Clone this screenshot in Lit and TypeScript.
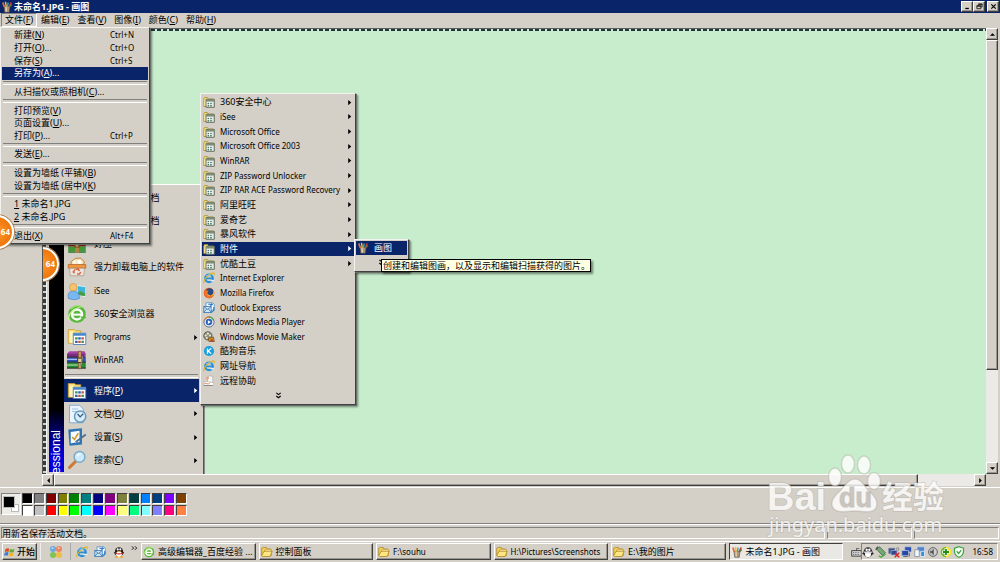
import { LitElement, html, svg, css, nothing } from "lit";
import { customElement, property } from "lit/decorators.js";

type Entry = { icon?: string; label: string; key?: string; hint?: string; sub?: boolean; active?: boolean };

const glyphs: Record<string, unknown> = {
  folder: svg`<path d="M1 4l1-2h4l1 2h7v10H1z" fill="#f3dd78" stroke="#a98c2c"/><path d="M2 5h3v8H2z" fill="#fff3b0"/><path d="M4 4.500h11v10.500H4z" fill="#fff" stroke="#5a6450" stroke-width="1.300"/><path d="M4 4.500h11v3H4z" fill="#7d8c76"/><path d="M6 9h2.200v2H6zM9.500 9h2.200v2H9.500zM6 12h2.200v2H6zM9.500 12h2.200v2H9.500z" fill="#4d7c6c"/><path d="M12.800 8h1.500v6h-1.500z" fill="#bbc9c0"/>`,
  open: svg`<path d="M1 13V3l2-1h4l1 2h5v3" fill="#f5d35c" stroke="#a97d13"/><path d="M5 5h9v8H4z" fill="#fffbd8" stroke="#c29a2b"/><path d="M1 13l3-6h11l-3 7H2z" fill="#ffe684" stroke="#a97d13"/>`,
  programs: svg`<path d="M1 2h5l1 1h4v10H1z" fill="#f8dc76" stroke="#c59b31" stroke-width=".6"/><path d="M2 4l3-1v10l-3-.5z" fill="#fff3b5"/><path d="M5 5h10v9H5z" fill="#fff" stroke="#4b7fb5" stroke-width=".7"/><path d="M5 5h10v2H5z" fill="#4a87cc"/><path d="M6.500 8.200h2v1.800h-2zM11.500 11h2v1.800h-2z" fill="#409157"/><path d="M9 8.200h2v1.800H9zM6.500 11h2v1.800h-2z" fill="#2860af"/><path d="M11.500 8.200h2v1.800h-2zM9 11h2v1.800H9z" fill="#bf5842"/>`,
  ie: svg`<circle cx="8" cy="8.500" r="5" fill="none" stroke="#2491da" stroke-width="3"/><path d="M4 8.500h9" stroke="#2491da" stroke-width="2.200"/><path d="M10 10.500h5v2h-5z" fill="#e8eef2"/><path d="M1.500 15C-.5 12 7 2 14.500 1c1 1 .5 2.500 0 3.500" fill="none" stroke="#e4b31e" stroke-width="1.400"/><path d="M4 5.500q3-3 7-1" stroke="#9adcfb" fill="none"/>`,
  green: svg`<circle cx="8" cy="8" r="7" fill="#59b83a"/><circle cx="8" cy="8.300" r="4" fill="none" stroke="#fff" stroke-width="2"/><path d="M4.500 8.500h7.500" stroke="#fff" stroke-width="1.600"/><path d="M11 10h4v1.500h-4z" fill="#59b83a"/><path d="M1 13C1 7 6 3 13 2" stroke="#c5f29b" stroke-width="1" fill="none"/><path d="M3 4q4-4 9-2" stroke="#a5e57f" fill="none"/>`,
  firefox: svg`<circle cx="8" cy="8" r="7" fill="#d94f1c"/><circle cx="9" cy="6.500" r="4.800" fill="#284c83"/><path d="M1.500 6l2-4 1 2.500 3 .5-1.500 2.500 1 3 4 .5 4-4c.5 5-3 8-7 8S1 11 1.500 6z" fill="#ed7424"/><path d="M13 3q3 5-2 9 5-1 4-6z" fill="#ffc23a"/><path d="M6 10l3 1.500" stroke="#ffce58"/>`,
  outlook: svg`<path d="M4 1h9l2 2v8H4z" fill="#f6faff" stroke="#488abd"/><path d="M1 6h10v8H1z" fill="#cde4f8" stroke="#2a6fae"/><path d="M1 6l5 4 5-4M1 14l4-5M11 14L7 9" fill="none" stroke="#2a6fae"/><path d="M7 3h5l-1-1M12 3l-2 2M14 7q2 5-3 7" fill="none" stroke="#2474c7" stroke-width="1.600"/>`,
  media: svg`<circle cx="8" cy="8" r="6.800" fill="#e9eef7" stroke="#656f88" stroke-width="1.300"/><path d="M8 1.500A6.500 6.500 0 0 0 2 6" stroke="#e67a24" stroke-width="1.500" fill="none"/><path d="M14 6a6.500 6.500 0 0 0-6-4.500" stroke="#4aa04b" stroke-width="1.500" fill="none"/><circle cx="8" cy="8" r="4.300" fill="#2863bd"/><path d="M6.500 5.500v5l4-2.500z" fill="#fff"/>`,
  movie: svg`<circle cx="6.500" cy="6.500" r="5.500" fill="#8e8d7a" stroke="#44443b"/><g fill="#ecebd8"><circle cx="6.500" cy="3.500" r="1.400"/><circle cx="3.600" cy="6" r="1.400"/><circle cx="9.400" cy="6" r="1.400"/><circle cx="5" cy="9.300" r="1.400"/></g><path d="M7 10l7-2 1 6H8z" fill="#d79b28" stroke="#714b12"/><path d="M8 14l4-4 3 4z" fill="#b94e2a"/>`,
  kugou: svg`<circle cx="8" cy="8" r="6.800" fill="#19a0df"/><path d="M6 4.500v7M11 4.500L6.800 8l4.200 3.500" stroke="#fff" stroke-width="1.700" fill="none"/>`,
  assist: svg`<path d="M6 3l3-2 4 1v8H6z" fill="#f7f7f7" stroke="#9b9b9b" stroke-width=".7"/><circle cx="6" cy="4" r="2" fill="#e8a184"/><path d="M1 9h9l4 2v3H2z" fill="#fff" stroke="#aaa" stroke-width=".7"/><path d="M2 11l5 1 3-2" stroke="#d9693a" fill="none"/><path d="M1 14h12" stroke="#777"/>`,
  paint: svg`<path d="M4 7h8l-1 8H5z" fill="#b09478" stroke="#554b44" stroke-width=".8"/><path d="M6 8h1.500l.5 6H6z" fill="#e8d6b8"/><path d="M4.500 8L2.500 2" stroke="#dd7135" stroke-width="2.400"/><path d="M7 8L6 1" stroke="#e2c23b" stroke-width="2"/><path d="M8.500 8l1-6" stroke="#39a7c8" stroke-width="2"/><path d="M11 8l2.500-6" stroke="#ca3e34" stroke-width="2.400"/><path d="M12 7l2.500-2" stroke="#4b8a3c" stroke-width="1.500"/>`,
  haozip: svg`<path d="M1 1h14v6H1z" fill="#c33a2a"/><path d="M1 7h14v3H1z" fill="#9f2618"/><path d="M1 10h14v4H1z" fill="#3d9a35"/><path d="M1 14h14v1H1z" fill="#246d24"/><path d="M6.500 1h3v14h-3z" fill="#b88046"/><path d="M5.500 7h5v4h-5z" fill="#8d5b2c"/><path d="M7 8h2v2H7z" fill="#f5d583"/>`,
  uninstall: svg`<path d="M3 4l4-3h4l3 3-2 4H4z" fill="#f4e4bc" stroke="#c57d39" stroke-width=".8"/><circle cx="6" cy="4" r="1.500" fill="#fff8e0"/><circle cx="10" cy="4" r="1.700" fill="#fff"/><path d="M1 6h14v3H1z" fill="#f0963c" stroke="#b2642c" stroke-width=".6"/><path d="M2 9h12l-.6 6H2.600z" fill="#ebe5df" stroke="#a8978b" stroke-width=".6"/><path d="M6 13l-1-1 1.500-2M7 9.700h2l1 1.500M11 12l-1 1.500H8" stroke="#de6741" fill="none" stroke-width="1.200"/>`,
  isee: svg`<path d="M8 3l7 1v9l-7-1z" fill="#fff" stroke="#b6c7c9" stroke-width=".5"/><path d="M8.500 4l6 .7v7.300l-6-.8z" fill="#3fb5dd"/><path d="M8.500 10l2-2 4 2v2l-6-.8z" fill="#4a9d3c"/><path d="M1 14q-1-6 4-6t5 6q-4 2-9 0z" fill="#78b7ef" stroke="#4a84c9" stroke-width=".5"/><circle cx="5" cy="5" r="3" fill="#f6c46c" stroke="#cc8e3b" stroke-width=".5"/>`,
  winrar: svg`<path d="M0 3l2-2h12l1 2v2H0z" fill="#a443a1"/><path d="M0 3h14v3H0z" fill="#7a2c80"/><path d="M0 6h15v4H0z" fill="#2e55bd"/><path d="M0 7.500h9" stroke="#a5bdf4"/><path d="M0 10h15v4.500H0z" fill="#2a8b33"/><path d="M0 12h9" stroke="#a3dea0"/><path d="M0 5.700h15M0 9.700h15M0 14.500h15" stroke="#242424" stroke-width=".8"/><path d="M9 1h2.500v14H9z" fill="#c99a5c" stroke="#694526" stroke-width=".5"/><path d="M8.500 6.500h3.500v3.500H8.500z" fill="#e8d18b" stroke="#46331d" stroke-width=".8"/><path d="M12.500 5l-1.500 8" stroke="#8c8b8b"/>`,
  docs: svg`<path d="M2 1h8l3 3v11H2z" fill="#ecf5fd" stroke="#75a6ce" stroke-width=".7"/><path d="M4 4h5M4 6h5" stroke="#9cc4e6" stroke-width=".8"/><circle cx="10.500" cy="10" r="4.500" fill="#d7ebf8" stroke="#669bbf" stroke-width="1.200"/><path d="M8.500 8l2 2.300 2.500-2.500" stroke="#315e83" fill="none"/>`,
  settings: svg`<path d="M1 2l11-1v13L2 15z" fill="#2f75b6"/><path d="M3 4l7-1v9l-7 1z" fill="#f8fbff"/><path d="M4 8l2 2 3-5" stroke="#d49c26" stroke-width="1.300" fill="none"/><path d="M7 12l8-6" stroke="#4c718e" stroke-width="1.500"/>`,
  search: svg`<path d="M2 14l5-5" stroke="#cb7b37" stroke-width="2.500" stroke-linecap="round"/><circle cx="10" cy="5.500" r="4.300" fill="#cceafa" stroke="#7baac9" stroke-width="1.200"/><path d="M8 5q1-2 3-2" stroke="#fff" fill="none"/>`,
  flag: svg`<path d="M2 4q3-2 5-.5L6 8Q4 6.500 1 8z" fill="#df4c22"/><path d="M8 4q3 1.500 6-.5l-1 4.500q-3 1.500-6 0z" fill="#65ad35"/><path d="M1 9q3-2 5-.5L5 13q-2-1.500-5 0z" fill="#3a7bd8"/><path d="M7 9q3 1.500 6-.5L12 13q-3 1.500-6 0z" fill="#f1b722"/>`,
  dots: svg`<circle cx="4.600" cy="4.600" r="3.500" fill="#6aaade"/><circle cx="11.400" cy="4.600" r="3.500" fill="#ee8160"/><circle cx="4.600" cy="11.400" r="3.500" fill="#80c35b"/><circle cx="11.400" cy="11.400" r="3.500" fill="#efbd45"/><g fill="#fff" opacity=".5"><circle cx="4" cy="3.600" r="1.200"/><circle cx="11" cy="3.600" r="1.200"/></g>`,
  qq: svg`<ellipse cx="8" cy="8" rx="5.500" ry="6.500" fill="#1e1c20"/><path d="M1 9l3-2v5zM15 9l-3-2v5z" fill="#1e1c20"/><ellipse cx="8" cy="11" rx="3.800" ry="4" fill="#fff"/><circle cx="6.300" cy="4.500" r="1.400" fill="#fff"/><circle cx="9.700" cy="4.500" r="1.400" fill="#fff"/><path d="M5 6.500h6L8 8.200z" fill="#f3a421"/><path d="M3 8.500q5 2.500 10 0v1.800q-5 2-10 0z" fill="#d9332a"/><path d="M2.500 13.500h4.500v2.100H2.500zM9 13.500h4.500v2.100H9z" fill="#f3a421"/>`,
  penguin: svg`<ellipse cx="8" cy="8.500" rx="6" ry="6.700" fill="#2b2c30"/><path d="M0 10l3-2v4zM16 10l-3-2v4z" fill="#2b2c30"/><ellipse cx="8" cy="11" rx="4" ry="4" fill="#fff"/><circle cx="6.200" cy="5" r="1.600" fill="#fff"/><circle cx="9.800" cy="5" r="1.600" fill="#fff"/><path d="M3 8q5 2 10 0" stroke="#ddd" stroke-width="1.800" fill="none"/>`,
  usb: svg`<path d="M2 4l4-3 8 8-4 4z" fill="#74a874" stroke="#426044"/><path d="M1 5l3-4" stroke="#555" stroke-width="2"/><path d="M5 13l3 2 6-4" stroke="#44a543" stroke-width="1.600" fill="none"/>`,
  netoff: svg`<path d="M1 3h8v7H1z" fill="#33508f" stroke="#76859f"/><path d="M4 6h8v6H4z" fill="#27479b" stroke="#a9b2c4"/><path d="M11 2q2 2 0 4M13 1q3 3 0 6" stroke="#777" fill="none"/><path d="M9 9l6 6M15 9l-6 6" stroke="#d62727" stroke-width="2"/>`,
  net: svg`<path d="M5 1h9v7H5z" fill="#2c50b0" stroke="#bdc6dc"/><path d="M1 6h9v7H1z" fill="#2647a5" stroke="#bdc6dc"/><path d="M3 14h6M11 9v5" stroke="#606878" stroke-width="1.500"/>`,
  netb: svg`<path d="M4 1h10v7H4z" fill="#4f83cf" stroke="#cbd8e8"/><path d="M1 5h6v9H1z" fill="#f4f7fa" stroke="#76859f"/><path d="M9 7h5v7H9z" fill="#3e8dd7" stroke="#eef"/>`,
  sound: svg`<circle cx="8" cy="8" r="6" fill="#b8b8b8" stroke="#707070" stroke-width="1.300"/><path d="M4 7h2l3-3v8L6 9H4z" fill="#555"/><path d="M10 5q2 3 0 6" stroke="#fff" fill="none"/>`,
  plus: svg`<circle cx="8" cy="8" r="7" fill="#f0e32a"/><path d="M1 8a7 7 0 0 1 7-7v14a7 7 0 0 1-7-7z" fill="#6dba31"/><path d="M8 3v10M3 8h10" stroke="#fff" stroke-width="4"/><path d="M8 4v8M4 8h8" stroke="#248b23" stroke-width="2.400"/>`,
  shield: svg`<path d="M8 1l6 2v5q-1 5-6 7-5-2-6-7V3z" fill="#f7fff5" stroke="#3ba544" stroke-width="1.600"/><path d="M5 7l2.500 3L11 5.500" stroke="#3ba544" stroke-width="1.700" fill="none"/>`,
  keyboard: svg`<path d="M1 6h14v8H1z" fill="#ddd" stroke="#333" stroke-width="1.300"/><path d="M3 9h10M3 11.500h10" stroke="#333" stroke-dasharray="1.500 1"/><path d="M8 6V3h4" stroke="#333" fill="none"/>`,
  arrow: svg`<path d="M5 2v12l7-6z" fill="currentColor"/>`,
  up: svg`<path d="M2 11h12L8 5z" fill="#000"/>`,
  down: svg`<path d="M2 5h12l-6 6z" fill="#000"/>`,
  left: svg`<path d="M11 2v12L5 8z" fill="#000"/>`,
  right: svg`<path d="M5 2v12l6-6z" fill="#000"/>`,
  more: svg`<path d="M3 2l5 4 5-4M3 9l5 4 5-4" fill="none" stroke="#000" stroke-width="2.600"/>`,
  next: svg`<path d="M2 3l4 4-4 4M9 3l4 4-4 4" fill="none" stroke="#000" stroke-width="2"/>`,
  min: svg`<path d="M3 11h8v3H3z" fill="#000"/>`,
  restore: svg`<path d="M5 2h9v7h-3M5 3.500h9M2 6h9v7H2zM2 7.500h9" fill="none" stroke="#000" stroke-width="1.700"/>`,
  close: svg`<path d="M3 3l10 10M13 3L3 13" stroke="#000" stroke-width="2.600"/>`,
};

const icon = (name: string, size = "s") =>
  html`<svg class="icon ${size}" viewBox="0 0 16 16" aria-hidden="true">${glyphs[name]}</svg>`;

const script = (text: string) => (/^[\x20-\x7e]+$/.test(text) ? "latin" : "");

const base = css`
  * { box-sizing: border-box; }
  button {
    font: inherit; color: inherit; text-align: left; border: 0; margin: 0; padding: 0;
    background: none; display: flex; align-items: center; white-space: nowrap;
  }
  .latin { font-size: 8px; }
  .icon { display: block; flex: none; }
  .s { width: 12px; height: 12px; }
  .t { width: 7px; height: 7px; }
  .l { width: 20px; height: 20px; }
  u { text-underline-offset: 1px; text-decoration-thickness: 1px; }
`;

@customElement("menu-panel")
class MenuPanel extends LitElement {
  @property({ attribute: false }) items: (Entry | null)[] = [];
  @property() kind = "plain";
  @property({ type: Boolean }) more = false;

  static styles = [base, css`
    :host {
      display: flex; flex-direction: column; background: #d4d0c8; color: #000;
      border: 1px solid; border-color: #f4f3ef #404040 #404040 #f4f3ef;
      box-shadow: 1px 1px 0 #69706a, 2px 2px 2px rgb(0 0 0 / 45%);
      box-sizing: border-box; padding: 1px;
    }
    :host([bare]) { border: 0; box-shadow: none; padding: 0; }
    button { flex: 1 1 0; min-height: 0; width: 100%; }
    .label { flex: 1; }
    .active { background: #0a246a; color: #fff; }
    .plain { padding-left: 12px; }
    .hint { width: 38px; }
    .programs { padding: 0 1px 0 1px; gap: 5px; }
    .start { padding: 0 0 0 3px; gap: 7px; }
    .accessory { padding: 0 1px; gap: 5px; }
    .rule { flex: none; height: 6px; display: flex; align-items: center; padding: 0 1px; }
    .rule::before { content: ""; flex: 1; height: 2px; border-top: 1px solid #808080; border-bottom: 1px solid #fff; }
    .expand { flex: none; height: 15px; justify-content: center; }
  `];

  render() {
    return html`${this.items.map((e) => e === null
      ? html`<div class="rule"></div>`
      : html`<button class="${this.kind} ${e.active ? "active" : ""}">
          ${e.icon ? icon(e.icon, this.kind === "start" ? "l" : "s") : nothing}
          <span class="label ${script(e.label)}">${e.key && e.label.startsWith(e.key)
            ? html`<u>${e.key}</u>${e.label.slice(e.key.length)}`
            : e.key
              ? html`${e.label.split("(" + e.key + ")")[0]}(<u>${e.key}</u>)${e.label.split("(" + e.key + ")")[1]}`
              : e.label}</span>
          ${e.hint ? html`<span class="hint latin">${e.hint}</span>` : nothing}
          ${e.sub ? icon("arrow", "t") : nothing}
        </button>`)}
      ${this.more ? html`<button class="expand" aria-label="More">${icon("more", "t")}</button>` : nothing}`;
  }
}

const fileItems: (Entry | null)[] = [
  { label: "新建(N)", key: "N", hint: "Ctrl+N" },
  { label: "打开(O)...", key: "O", hint: "Ctrl+O" },
  { label: "保存(S)", key: "S", hint: "Ctrl+S" },
  { label: "另存为(A)...", key: "A", active: true },
  null,
  { label: "从扫描仪或照相机(C)...", key: "C" },
  null,
  { label: "打印预览(V)", key: "V" },
  { label: "页面设置(U)...", key: "U" },
  { label: "打印(P)...", key: "P", hint: "Ctrl+P" },
  null,
  { label: "发送(E)...", key: "E" },
  null,
  { label: "设置为墙纸 (平铺)(B)", key: "B" },
  { label: "设置为墙纸 (居中)(K)", key: "K" },
  null,
  { label: "1 未命名1.JPG", key: "1" },
  { label: "2 未命名.JPG", key: "2" },
  null,
  { label: "退出(X)", key: "X", hint: "Alt+F4" },
];

const programItems: Entry[] = [
  ...["360安全中心", "iSee", "Microsoft Office", "Microsoft Office 2003", "WinRAR", "ZIP Password Unlocker",
    "ZIP RAR ACE Password Recovery", "阿里旺旺", "爱奇艺", "暴风软件", "附件", "优酷土豆"]
    .map((label) => ({ icon: "folder", label, sub: true, active: label === "附件" })),
  { icon: "ie", label: "Internet Explorer" },
  { icon: "firefox", label: "Mozilla Firefox" },
  { icon: "outlook", label: "Outlook Express" },
  { icon: "media", label: "Windows Media Player" },
  { icon: "movie", label: "Windows Movie Maker" },
  { icon: "kugou", label: "酷狗音乐" },
  { icon: "ie", label: "网址导航" },
  { icon: "assist", label: "远程协助" },
];

const pinnedItems: Entry[] = [
  { icon: "docs", label: "新建 Office 文档" },
  { icon: "open", label: "打开 Office 文档" },
  { icon: "haozip", label: "好压" },
  { icon: "uninstall", label: "强力卸载电脑上的软件" },
  { icon: "isee", label: "iSee" },
  { icon: "green", label: "360安全浏览器" },
  { icon: "programs", label: "Programs", sub: true },
  { icon: "winrar", label: "WinRAR" },
];

const systemItems: Entry[] = [
  { icon: "programs", label: "程序(P)", key: "P", sub: true, active: true },
  { icon: "docs", label: "文档(D)", key: "D", sub: true },
  { icon: "settings", label: "设置(S)", key: "S", sub: true },
  { icon: "search", label: "搜索(C)", key: "C", sub: true },
];

const colours = [
  "#000000", "#808080", "#800000", "#808000", "#008000", "#008080", "#000080",
  "#800080", "#808040", "#004040", "#0080ff", "#004080", "#8000ff", "#804000",
  "#ffffff", "#c0c0c0", "#ff0000", "#ffff00", "#00ff00", "#00ffff", "#0000ff",
  "#ff00ff", "#ffff80", "#00ff80", "#80ffff", "#8080ff", "#ff0080", "#ff8040",
];

const tasks: Entry[] = [
  { icon: "green", label: "高级编辑器_百度经验 ..." },
  { icon: "open", label: "控制面板" },
  { icon: "open", label: "F:\\souhu" },
  { icon: "open", label: "H:\\Pictures\\Screenshots" },
  { icon: "open", label: "E:\\我的图片" },
  { icon: "paint", label: "未命名1.JPG - 画图", active: true },
];

@customElement("app-root")
class AppRoot extends LitElement {
  static styles = [base, css`
    :host {
      display: flex; flex-direction: column; height: 100vh; overflow: hidden; position: relative;
      background: #d4d0c8; color: #000;
      font: 9px/12px "Noto Sans", "Noto Sans CJK SC", sans-serif;
    }
    .raised { border: 1px solid; border-color: #fff #404040 #404040 #fff; box-shadow: inset -1px -1px #9a978f; background: #d4d0c8; }
    .title { height: 13px; flex: none; display: flex; align-items: center; gap: 1px; padding: 0 1px; background: #0a246a; color: #fff; font-weight: 700; }
    .title .text { flex: 1; }
    .window-buttons { display: flex; }
    .window-buttons button { width: 12px; height: 11px; justify-content: center; }
    .window-buttons button:last-child { margin-left: 2px; }
    .menubar { height: 14px; flex: none; display: flex; padding: 0 1px; position: relative; z-index: 3; }
    .menubar > button { padding: 0 4px; }
    .menubar > .open { border: 1px solid; border-color: #808080 #fff #fff #808080; padding: 0 3px; }
    .file-menu { position: absolute; left: 0; top: 14px; width: 150px; height: 217px; }

    .work { flex: 1; min-height: 0; display: grid; grid-template: minmax(0, 1fr) 12px / 42px minmax(0, 1fr) 12px; padding: 1px 2px 1px 0; }
    .tools { grid-row: 1 / 3; }
    .view { position: relative; overflow: hidden; background: #c7edcc; border-left: 1px solid #555; border-top: 1px solid #606060; }
    .view::before { content: ""; position: absolute; inset: 0 0 auto 0; height: 2px; background: repeating-linear-gradient(90deg, #1c3a3a 0 4px, #d9e8dd 4px 6px); }
    .view::after { content: ""; position: absolute; inset: 0 auto 0 0; width: 3px; background: repeating-linear-gradient(#333b3b 0 4px, #d4d0c8 4px 6px); border-right: 1px solid #eef3ef; }
    .start-menu {
      position: absolute; left: 3px; top: 155px; width: 158px; height: 301px; display: flex; padding: 1px 4px 12px 2px;
      background: #d4d0c8; border: 1px solid; border-color: #fff #555 #555 #fff; box-shadow: 1px 0 #888;
    }
    .strip { width: 15px; flex: none; display: flex; flex-direction: column; align-items: center; padding-top: 244px; background: linear-gradient(#000 78%, #0000d8 94%); color: #fff; font: 12px/15px "Liberation Sans", sans-serif; }
    .strip span { flex: none; writing-mode: vertical-rl; transform: rotate(180deg); }
    .lists { flex: 1; display: flex; flex-direction: column; min-width: 0; }
    .pinned { height: 188px; }
    .system { height: 94px; }
    .rule { height: 7px; display: flex; align-items: center; padding: 0 1px; }
    .rule::before { content: ""; flex: 1; height: 2px; border-top: 1px solid #808080; border-bottom: 1px solid #fff; }
    .program-menu { position: absolute; left: 157px; top: 64px; width: 156px; height: 312px; }
    .accessory-menu { position: absolute; left: 311px; top: 210px; width: 55px; height: 33px; }
    .tip { position: absolute; left: 338px; top: 230px; padding: 0 0 0 1px; background: #ffffe1; border: 1px solid #000; box-shadow: 2px 2px 2px rgb(0 0 0 / 45%); white-space: nowrap; line-height: 11px; }
    .badge { width: 34px; height: 34px; border-radius: 50%; display: flex; align-items: center; justify-content: flex-end; padding-right: 2px; color: #fff; font-weight: 700; background: radial-gradient(#ff9a2e, #f07a10 60%); border: 2px solid #fff; box-shadow: 0 0 0 1px #ab8258; }
    .badge.inner { position: absolute; left: -18px; top: 218px; z-index: 1; }
    .badge.outer { position: absolute; left: -20px; top: 215px; z-index: 4; }

    .bar { display: flex; background: #eceae6; }
    .bar button { width: 12px; height: 12px; flex: none; justify-content: center; }
    .bar .thumb { flex: none; }
    .vertical { flex-direction: column; }
    .vertical .thumb { height: 74%; width: 12px; }
    .vertical .gap, .horizontal .gap { flex: 1; }
    .horizontal { min-width: 0; }
    .horizontal .thumb { width: 91.5%; height: 12px; }

    .palette { height: 37px; flex: none; border-top: 1px solid #fff; border-bottom: 1px solid #808080; display: flex; align-items: center; padding: 0 0 3px 1px; gap: 1px; }
    .current { width: 20px; height: 22px; background: #eeece8; border: 1px solid; border-color: #808080 #fff #fff #808080; display: grid; grid-template: repeat(4, 4px) / repeat(4, 4px); padding: 2px 1px; }
    .back { grid-area: 3 / 3 / 5 / 5; background: #fff; border: 1px solid #bbb; }
    .fore { grid-area: 1 / 1 / 4 / 4; background: #000; margin: 1px; outline: 1px solid #bbb; }
    .swatches { display: grid; grid-template: repeat(2, 11px) / repeat(14, 1fr); gap: 1px; width: 165px; }
    .swatches button { border: 1px solid; border-color: #404040 #fff #fff #404040; }
    .status { height: 17px; flex: none; display: flex; gap: 2px; padding: 2px 1px; border-top: 1px solid #fff; }
    .status span { border: 1px solid; border-color: #808080 #fff #fff #808080; line-height: 12px; width: 85px; }
    .status .wide { flex: 1; }

    .taskbar { height: 21px; flex: none; border-top: 1px solid #fff; display: flex; align-items: stretch; padding: 1px 2px 2px 2px; gap: 3px; }
    .taskbar .start-button { width: 35px; font-weight: 500; padding: 0 1px; gap: 1px; }
    .dots { width: 31px; display: flex; justify-content: center; align-items: center; border-left: 1px solid #eee; border-right: 1px solid #aaa; }
    .dots svg { width: 14px; height: 14px; }
    .quick { width: 64px; display: flex; align-items: center; justify-content: space-between; padding-left: 2px; }
    .quick .next { align-self: flex-start; padding-top: 2px; }
    .tasks { flex: 1; display: flex; gap: 3px; min-width: 0; }
    .tasks button { flex: 1 1 0; min-width: 0; overflow: hidden; padding: 0 1px; gap: 3px; }
    .tasks .pressed { background: #eae8e4; border: 1px solid; border-color: #404040 #fff #fff #404040; }
    .lang { display: flex; align-items: center; margin-left: 5px; }
    .lang svg { width: 11px; }
    .tray { width: 137px; margin-left: -4px; display: flex; align-items: center; gap: 1px; border: 1px solid; border-color: #808080 #fff #fff #808080; padding-right: 4px; }
    .tray time { flex: 1; text-align: right; }

    .watermark { position: absolute; right: 50px; bottom: 22px; width: 186px; height: 88px; z-index: 5; pointer-events: none; overflow: visible; }
    .watermark text { paint-order: stroke; }
    .brand { font: 700 38px "Liberation Sans", sans-serif; }
    .paw { font: 700 27px "Liberation Sans", sans-serif; fill: #bfb9b1; }
    .han { font: 700 31px "Noto Sans CJK SC", sans-serif; }
    .site { font: 20px "Noto Sans", sans-serif; }
  `];

  render() {
    const menus: [string, string][] = [["文件", "F"], ["编辑", "E"], ["查看", "V"], ["图像", "I"], ["颜色", "C"], ["帮助", "H"]];
    return html`
      <header class="title">
        ${icon("paint")}<span class="text">未命名1.JPG - 画图</span>
        <div class="window-buttons">
          <button class="raised" aria-label="Minimize">${icon("min", "t")}</button>
          <button class="raised" aria-label="Restore">${icon("restore", "t")}</button>
          <button class="raised" aria-label="Close">${icon("close", "t")}</button>
        </div>
      </header>
      <nav class="menubar">
        ${menus.map(([name, key], i) => html`<button class=${i === 0 ? "open" : ""}>${name}(<u>${key}</u>)</button>`)}
        <menu-panel class="file-menu" .items=${fileItems}></menu-panel>
      </nav>
      <main class="work">
        <div class="tools"></div>
        <div class="view">
          <div class="start-menu">
            <div class="strip"><span>essional</span></div>
            <div class="lists">
              <menu-panel bare class="pinned" kind="start" .items=${pinnedItems}></menu-panel>
              <div class="rule"></div>
              <menu-panel bare class="system" kind="start" .items=${systemItems}></menu-panel>
            </div>
          </div>
          <menu-panel class="program-menu" kind="programs" more .items=${programItems}></menu-panel>
          <menu-panel class="accessory-menu" kind="accessory" more .items=${[{ icon: "paint", label: "画图", active: true }]}></menu-panel>
          <div class="tip" role="tooltip">创建和编辑图画，以及显示和编辑扫描获得的图片。</div>
          <div class="badge inner latin">64</div>
        </div>
        <div class="bar vertical">
          <button class="raised" aria-label="Up">${icon("up", "t")}</button>
          <div class="thumb raised"></div><div class="gap"></div>
          <button class="raised" aria-label="Down">${icon("down", "t")}</button>
        </div>
        <div class="bar horizontal">
          <button class="raised" aria-label="Left">${icon("left", "t")}</button>
          <div class="thumb raised"></div><div class="gap"></div>
          <button class="raised" aria-label="Right">${icon("right", "t")}</button>
        </div>
      </main>
      <section class="palette">
        <div class="current"><i class="back"></i><i class="fore"></i></div>
        <div class="swatches">${colours.map((c) => html`<button style="background:${c}" aria-label=${c}></button>`)}</div>
      </section>
      <footer class="status"><span class="wide">用新名保存活动文档。</span><span></span><span></span></footer>
      <div class="taskbar">
        <button class="start-button raised">${icon("flag")}开始</button>
        <div class="dots">${icon("dots")}</div>
        <div class="quick">${icon("ie")}${icon("outlook")}${icon("qq")}<span class="next">${icon("next", "t")}</span></div>
        <div class="tasks">${tasks.map((t) => html`<button class=${t.active ? "pressed" : "raised"}>${icon(t.icon!)}<span class=${script(t.label)}>${t.label}</span></button>`)}</div>
        <div class="lang">${icon("keyboard")}</div>
        <div class="tray">
          ${["penguin", "usb", "netoff", "net", "netb", "sound", "plus", "shield"].map((n) => icon(n))}
          <time class="latin">16:58</time>
        </div>
      </div>
      <div class="badge outer latin">64</div>
      <svg class="watermark" viewBox="0 0 186 88" fill="#fff" fill-opacity=".8" stroke="#aaa59c" stroke-opacity=".4" stroke-width="1.500">
        <text class="brand" x="3" y="58">Bai</text>
        <ellipse cx="71" cy="25" rx="6.500" ry="9"/><ellipse cx="84" cy="12" rx="6.500" ry="9"/>
        <ellipse cx="100" cy="13" rx="6.500" ry="9"/><ellipse cx="110" cy="29" rx="6.500" ry="8.500"/>
        <path d="M91 27C84 27 81 34 76 39C69 45 66 51 69 56C73 62 82 59 91 59C100 59 109 62 112 56C115 50 111 44 104 38C100 33 97 27 91 27Z"/>
        <text class="paw" x="75" y="55">du</text>
        <text class="han" x="118" y="56">经验</text>
        <text class="site" x="5" y="80">jingyan.baidu.com</text>
      </svg>`;
  }
}
